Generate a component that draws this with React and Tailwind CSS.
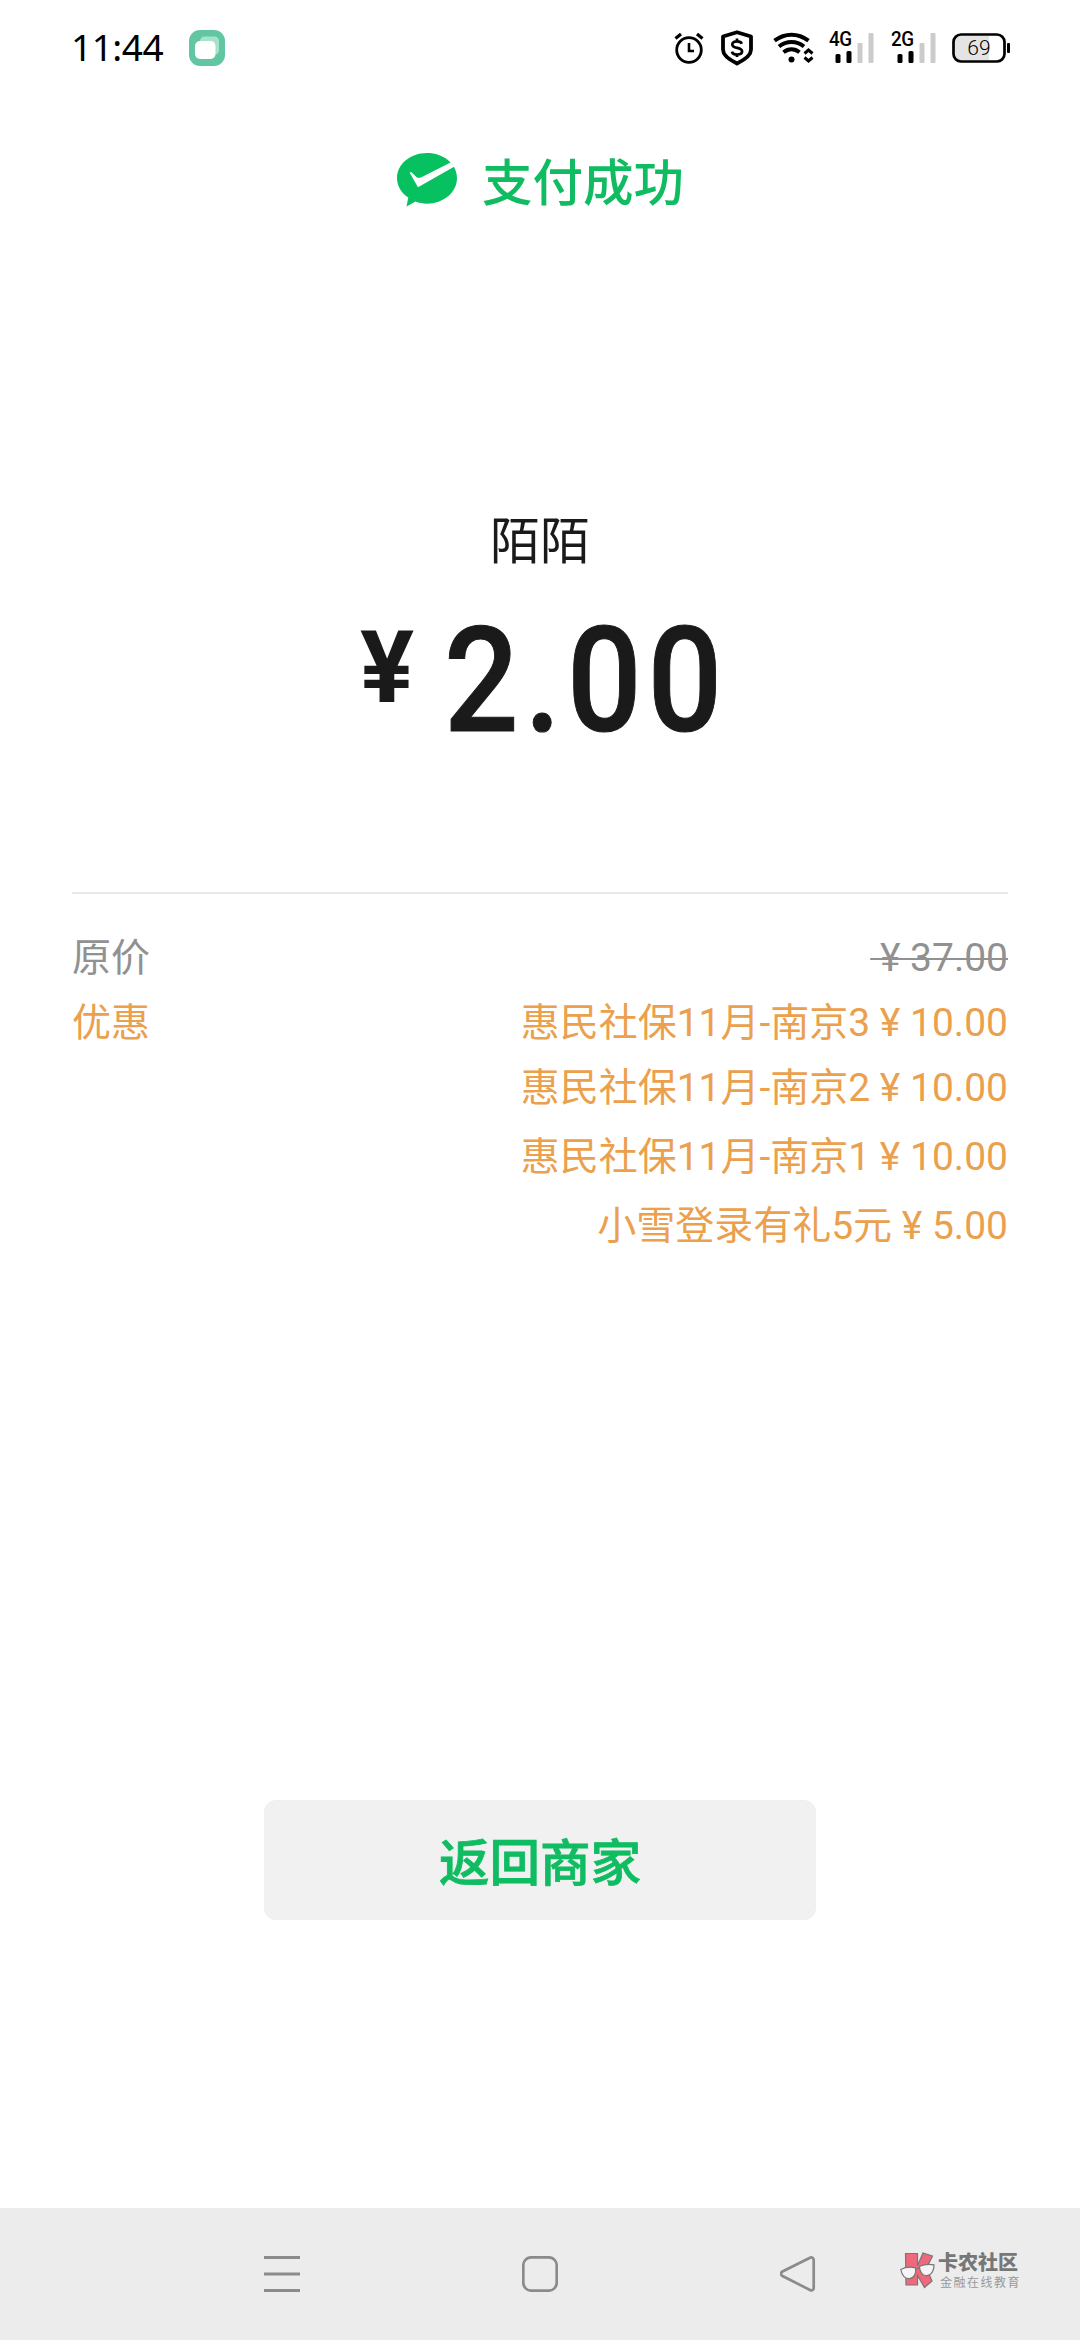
const coupons = [
  { name: "惠民社保11月-南京3", amount: "10.00", row: "h-[65px] leading-[65px]" },
  { name: "惠民社保11月-南京2", amount: "10.00", row: "h-[65px] leading-[65px]" },
  { name: "惠民社保11月-南京1", amount: "10.00", row: "h-[69px] leading-[73px]" },
  { name: "小雪登录有礼5元", amount: "5.00", row: "h-[69px] leading-[73px]" },
];

function AppBadge() {
  return (
    <svg className="ml-[26px]" width="36" height="36" viewBox="0 0 36 36">
      <rect width="36" height="36" rx="11" fill="#62c6a3" />
      <rect x="11" y="6.500" width="19" height="18" rx="4.500" fill="#a5e3cd" />
      <rect x="6" y="11" width="20.500" height="18" rx="5" fill="#fff" />
    </svg>
  );
}

function AlarmIcon() {
  return (
    <svg width="30" height="32" viewBox="0 0 30 32" fill="none" stroke="#000">
      <circle cx="15" cy="18" r="12.300" strokeWidth="2.800" />
      <path d="M1.500 6.500 7 2M28.500 6.500 23 2" strokeWidth="3.200" />
      <path d="M15 11v8h5" strokeWidth="2.600" />
    </svg>
  );
}

function ShieldIcon() {
  return (
    <svg className="ml-[16px]" width="34" height="36" viewBox="0 0 34 36" fill="none" stroke="#000">
      <path d="M17 2.200 31 6.500v13.300c0 6.200-6.800 10.200-14 13.700-7.200-3.500-14-7.500-14-13.700V6.500Z" strokeWidth="3.800" strokeLinejoin="round" />
      <path d="M21.800 13.700c-.6-1.600-2.400-2.400-4.800-2.400-2.800 0-4.700 1.200-4.700 3.100 0 4.600 9.800 2.300 9.800 6.900 0 2-2 3.200-5 3.200-2.700 0-4.700-1-5.200-2.900M17 8.500v3M17 24v3" strokeWidth="2.700" />
    </svg>
  );
}

function WifiIcon() {
  return (
    <svg className="ml-[19px]" width="41" height="32" viewBox="0 0 41 32" fill="none" stroke="#000">
      <path d="M1.500 8.700C12 .7 25 .7 35.500 8.700" strokeWidth="4" />
      <path d="M6 14.500c7.500-6 17.500-6 25 0" strokeWidth="4" />
      <path d="M10.500 20.300c5-4 11-4 16 0" strokeWidth="4" />
      <circle cx="18.500" cy="27.500" r="3" fill="#000" stroke="none" />
      <path d="m31.500 21.500 4-3.500 4 3.500M31.500 25.500l4 3.500 4-3.500" strokeWidth="3" />
    </svg>
  );
}

function Signal({ label }) {
  return (
    <div className="relative h-[32px] w-[46px]">
      <span className="absolute left-0 top-[-2px] origin-left scale-x-[0.94] text-[20px] leading-[19px] font-medium tracking-[-0.5px]">
        {label}
      </span>
      <svg className="absolute right-0 top-0" width="40" height="32" viewBox="0 0 40 32">
        <rect x="0.500" y="22" width="5" height="9" rx="1.500" />
        <rect x="11.500" y="19" width="5" height="12" rx="1.500" />
        <rect x="22.500" y="11" width="5" height="20" rx="1" fill="#cbcbcb" />
        <rect x="33.500" y="1" width="5" height="30" rx="1" fill="#cbcbcb" />
      </svg>
    </div>
  );
}

function Battery() {
  return (
    <div className="relative ml-[15px] h-[30px] w-[59px]">
      <svg width="59" height="30" viewBox="0 0 59 30">
        <path d="M9 3h28v24H9a6 6 0 0 1-6-6V9a6 6 0 0 1 6-6Z" fill="#e4e4e4" />
        <rect x="1.500" y="1.500" width="51" height="27" rx="7.500" fill="none" stroke="#000" strokeWidth="2.700" />
        <rect x="55" y="10" width="3" height="10" rx="1" />
      </svg>
      <span className="absolute left-0 top-0 w-[54px] text-center text-[21px] leading-[30px] font-light">69</span>
    </div>
  );
}

function StatusBar() {
  return (
    <header className="flex h-[96px] items-center pl-[71px] pr-[69px] text-black">
      <span className="pb-[2px] font-['Noto_Sans'] text-[37px] leading-[40px] tracking-[-0.5px]">11:44</span>
      <AppBadge />
      <div className="ml-auto flex items-center">
        <AlarmIcon />
        <ShieldIcon />
        <WifiIcon />
        <div className="ml-[15px] flex gap-[16px]">
          <Signal label="4G" />
          <Signal label="2G" />
        </div>
        <Battery />
      </div>
    </header>
  );
}

function PayLogo() {
  return (
    <svg className="mb-[8px]" width="62" height="56" viewBox="0 0 62 56">
      <path d="M31 1C14.500 1 1 12 1 26c0 8 4.300 15 11.300 19.600L10.500 54.500l9-5C23 50.900 27 51.700 31 51.700c16.500 0 30-11.400 30-25.700S47.500 1 31 1Z" fill="#07c160" />
      <path d="M13.500 20.500 22 35.300 58.500 14.500 55 10.200 24.500 25.700l-3.300.1-5.700-5.600Z" fill="#fff" />
    </svg>
  );
}

function Watermark() {
  return (
    <div className="absolute left-[900px] top-[44px] flex">
      <svg width="35" height="37" viewBox="0 0 35 37" stroke="#777" strokeWidth="1.200">
        <path d="M5.500 1.500h12v12L23 1l9.500 3-6 12L32 29l-7.500 6.500-7-12V33H6Z" fill="#f0687c" />
        <path d="M.8 17.500c4.500-2.500 10-2.800 14.700-1.700C16.500 21 14 26.500 9.500 26.700 4.500 26.800 1.800 22.500.8 17.500ZM19.300 14.500c4.500-2.200 9.500-2.700 14.700-1.700.2 5.200-2.300 10.500-7 10.900-4.500.2-7-4-7.700-9.200ZM15.500 17l3.800-1" fill="#f5f5f5" />
      </svg>
      <div className="ml-[3px] flex flex-col">
        <span className="text-[20px] leading-[23px] font-black text-[#777]">卡农社区</span>
        <span className="pl-[2px] text-[12px] leading-[16px] tracking-[1.500px] whitespace-nowrap text-[#999]">金融在线教育</span>
      </div>
    </div>
  );
}

function NavBar() {
  return (
    <nav className="relative flex h-[132px] items-center justify-between bg-[#ececec] px-[264px]">
      <svg width="36" height="36" viewBox="0 0 36 36" stroke="#8b8b8b" strokeWidth="3">
        <path d="M0 1.500h36M0 18h36M0 34.500h36" />
      </svg>
      <svg width="36" height="36" viewBox="0 0 36 36" fill="none" stroke="#8b8b8b" strokeWidth="2.700">
        <rect x="1.300" y="1.300" width="33.400" height="33.400" rx="8" />
      </svg>
      <svg width="36" height="36" viewBox="0 0 36 36" fill="none" stroke="#8b8b8b" strokeWidth="2.700">
        <path d="M30 1.800 2.500 15.500c-2 1.200-2 3.300 0 4.500L30 34c2 1 3.700 0 3.700-2V4c0-2-1.700-3.200-3.700-2.200Z" />
      </svg>
      <Watermark />
    </nav>
  );
}

export default function App() {
  return (
    <div className="flex h-[2340px] w-[1080px] flex-col bg-white font-[Roboto,'Noto_Sans_CJK_SC',sans-serif]">
      <StatusBar />

      <div className="mt-[58px] flex h-[60px] items-center justify-center gap-[24px] text-[50.5px] leading-[60px] font-medium text-[#10bc61]">
        <PayLogo />
        <span>支付成功</span>
      </div>

      <div className="mt-[298px] text-center text-[50px] leading-[60px] text-[#1a1a1a]">陌陌</div>

      <div className="mt-[36px] flex h-[147px] pl-[360px] leading-[147px] font-medium text-[#1a1a1a]">
        <span className="mr-[30px] text-[101px] leading-[119px] font-bold">¥</span>
        <span className="origin-left scale-x-[0.9] text-[146px] tracking-[6.500px] [-webkit-text-stroke:1px_#1a1a1a]">2.00</span>
      </div>

      <section className="mx-[72px] mt-[137px] border-t-2 border-[#e8e8e8] pt-[32px] text-[39px]">
        <div className="flex h-[65px] justify-between leading-[65px] text-[#919191]">
          <span>原价</span>
          <span className="line-through decoration-2">&nbsp;¥&nbsp;37.00</span>
        </div>
        <div className="flex justify-between text-[#eba04d]">
          <span className="leading-[65px]">优惠</span>
          <ul className="text-right">
            {coupons.map((c) => (
              <li key={c.name} className={c.row}>
                {c.name}&nbsp;¥&nbsp;{c.amount}
              </li>
            ))}
          </ul>
        </div>
      </section>

      <button
        type="button"
        className="mx-auto mt-auto mb-[288px] h-[120px] w-[552px] rounded-[12px] bg-[#f1f1f1] pt-[7px] text-[50.5px] font-medium text-[#10bc61] [-webkit-text-stroke:0.8px_#10bc61]"
      >
        返回商家
      </button>

      <NavBar />
    </div>
  );
}
